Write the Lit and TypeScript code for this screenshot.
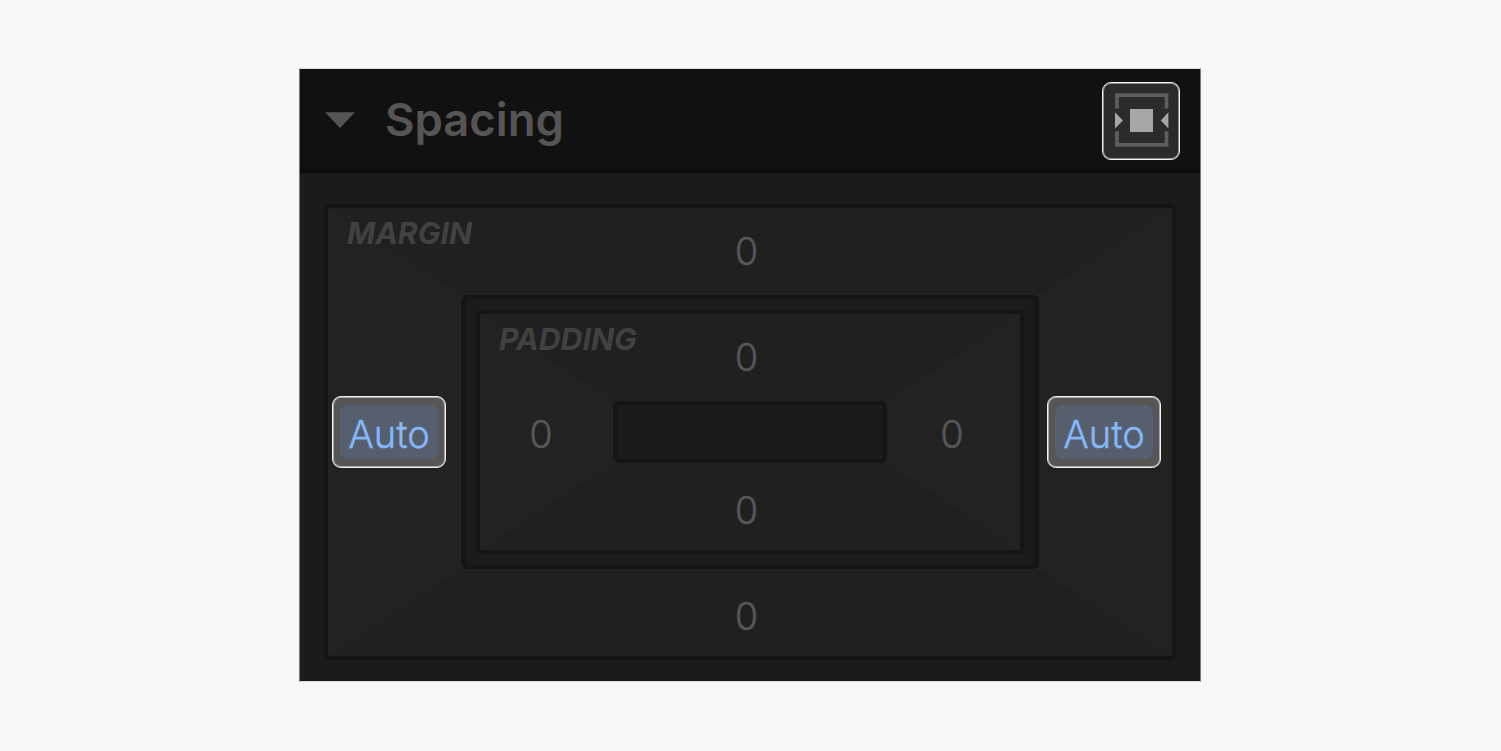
import { css, html, LitElement } from "lit";
import { customElement, property } from "lit/decorators.js";

@customElement("spacing-box")
export class SpacingBox extends LitElement {
    static styles = css`
        :host {
            display: grid;
            box-sizing: border-box;
            grid-template: 87px minmax(0, 1fr) 87px / 133px minmax(0, 1fr) 133px;
            border: 4px solid #151515;
            border-radius: 6px;
            background: #222222;
            color: #575757;
            font-size: 38px;
            font-weight: 300;
            line-height: 46px;
            -webkit-text-stroke: 0.4px currentColor;
        }

        .side {
            display: flex;
            align-items: center;
            justify-content: center;
            box-sizing: border-box;
        }

        .top {
            grid-area: 1 / 1 / 2 / 4;
            padding: 0 7px 2px 0;
            background: #202020;
            clip-path: polygon(
                0 0,
                100% 0,
                calc(100% - 133px) 100%,
                133px 100%
            );
        }

        .bottom {
            grid-area: 3 / 1 / 4 / 4;
            padding: 6px 7px 0 0;
            background: #202020;
            clip-path: polygon(
                133px 0,
                calc(100% - 133px) 0,
                100% 100%,
                0 100%
            );
        }

        .left {
            grid-area: 2 / 1;
            padding-right: 11px;
        }

        .right {
            grid-area: 2 / 3;
            padding-right: 3px;
        }

        .zero {
            padding-top: 3px;
        }

        .label {
            grid-area: 1 / 1 / 2 / 3;
            z-index: 1;
            padding: 7px 0 0 19px;
            color: #414141;
            font-size: 30.3px;
            font-style: italic;
            font-weight: 700;
            line-height: 36px;
            -webkit-text-stroke: 0;
        }

        .content {
            grid-area: 2 / 2;
            display: grid;
        }

        .auto {
            display: flex;
            box-sizing: border-box;
            width: 114px;
            height: 72px;
            padding: 8px 7px;
            border: 1px solid #f0f0f0;
            border-radius: 9px;
            background: #565656;
            box-shadow: inset 0 0 0 1px #a8a8a8;
        }

        .chip {
            flex: 1;
            padding-top: 6px;
            border-radius: 7px;
            background: #555f6d;
            color: #86b8f8;
            text-align: center;
        }
    `;

    @property() label = "";
    @property() top = "0";
    @property() right = "0";
    @property() bottom = "0";
    @property() left = "0";

    renderValue(value: string) {
        return value === "Auto"
            ? html`<div class="auto"><div class="chip">${value}</div></div>`
            : html`<span class="zero">${value}</span>`;
    }

    render() {
        return html`
            <div class="label">${this.label}</div>
            <div class="side top">${this.top}</div>
            <div class="side left">${this.renderValue(this.left)}</div>
            <div class="content"><slot></slot></div>
            <div class="side right">${this.renderValue(this.right)}</div>
            <div class="side bottom">${this.bottom}</div>
        `;
    }
}

@customElement("app-root")
export class AppRoot extends LitElement {
    static styles = css`
        :host {
            display: flex;
            box-sizing: border-box;
            height: 751px;
            padding: 68px 0 0 299px;
            align-items: flex-start;
            background: #f5f7f9;
            font-family: Inter, sans-serif;
        }

        .panel {
            box-sizing: border-box;
            width: 902px;
            height: 614px;
            border: 1px solid #77787a;
            border-top-color: #dcdcdd;
            border-bottom-color: #dcdcdd;
            background: #1b1b1b;
        }

        .header {
            display: flex;
            box-sizing: border-box;
            height: 104px;
            padding: 0 20px 0 25px;
            align-items: center;
            border-bottom: 4px solid #0d0d0d;
            background: #111111;
        }

        .caret {
            width: 30px;
            height: 16px;
            margin-top: 2px;
            fill: #555555;
        }

        .title {
            flex: 1;
            margin: 2px 0 0 30px;
            color: #555555;
            font-size: 45.4px;
            font-weight: 600;
            line-height: 56px;
        }

        .center {
            display: flex;
            box-sizing: border-box;
            width: 78px;
            height: 78px;
            margin-top: 4px;
            padding: 1px;
            border: 1px solid #f0f0f0;
            border-radius: 9px;
            background: #2b2b2b;
            box-shadow: inset 0 0 0 1px #8c8c8c;
        }

        .margin {
            width: 852px;
            height: 456px;
            margin: 31px 0 0 24px;
        }

        .ring {
            display: grid;
            padding: 11px;
            border: 4px solid #151515;
            border-radius: 6px;
            background: #1b1b1b;
        }

        .core {
            border: 4px solid #151515;
            border-radius: 6px;
            background: #1b1b1b;
        }
    `;

    render() {
        return html`
            <section class="panel">
                <header class="header">
                    <svg class="caret" viewBox="0 0 30 16">
                        <path d="M0 0.3H30L15 16Z" />
                    </svg>
                    <h2 class="title">Spacing</h2>
                    <div class="center">
                        <svg width="74" height="74" viewBox="0 0 74 74">
                            <path
                                d="M13 24.5V11.2H62.5V24.5M13 47.3V60.8H62.5V47.3"
                                fill="none"
                                stroke="#5e5e5e"
                                stroke-width="3.8"
                            />
                            <path
                                d="M26 25H49V48H26ZM11 28.2L18.9 36.4L11 44.5ZM64.4 28.2L56.8 36.4L64.4 44.5Z"
                                fill="#a6a6a6"
                            />
                        </svg>
                    </div>
                </header>
                <spacing-box
                    class="margin"
                    label="MARGIN"
                    left="Auto"
                    right="Auto"
                >
                    <div class="ring">
                        <spacing-box label="PADDING">
                            <div class="core"></div>
                        </spacing-box>
                    </div>
                </spacing-box>
            </section>
        `;
    }
}
